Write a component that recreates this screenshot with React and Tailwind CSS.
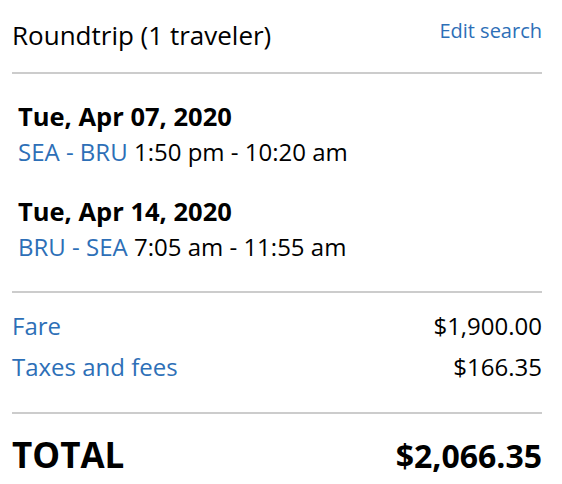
import React from 'react';

const BLUE = 'text-[#2d6fb7]';

const Leg = ({ date, route, times, className }) => (
  <div className={className}>
    <div className="text-[25.5px] leading-[34px] font-bold">{date}</div>
    <div className="mt-[2px] text-[24px] leading-[34px]">
      <span className={BLUE}>{route}</span> {times}
    </div>
  </div>
);

const PriceRow = ({ label, amount, className }) => (
  <div className={`flex justify-between text-[24px] leading-[34px] ${className || ''}`}>
    <span className={BLUE}>{label}</span>
    <span>{amount}</span>
  </div>
);

export default function App() {
  return (
    <div
      className="w-[562px] h-[484px] bg-white text-black pl-3 pr-[20px] overflow-hidden"
      style={{ fontFamily: '"Open Sans", "Liberation Sans", sans-serif' }}
    >
      {/* Header */}
      <div className="flex justify-between items-start pt-[17px] pb-[19px] border-b-2 border-[#cccccc]">
        <span className="text-[26px] leading-[36px]">Roundtrip (1 traveler)</span>
        <a className={`text-[20px] leading-[28px] ${BLUE}`} href="#">Edit search</a>
      </div>

      {/* Flights */}
      <div className="pl-[6px] pt-[25px] pb-[27px] border-b-2 border-[#cccccc]">
        <Leg date="Tue, Apr 07, 2020" route="SEA - BRU" times="1:50 pm - 10:20 am" />
        <Leg className="mt-[25px]" date="Tue, Apr 14, 2020" route="BRU - SEA" times="7:05 am - 11:55 am" />
      </div>

      {/* Fare breakdown */}
      <div className="pt-[16px] pb-[28px] border-b-2 border-[#cccccc]">
        <PriceRow label="Fare" amount="$1,900.00" />
        <PriceRow className="mt-[7px]" label="Taxes and fees" amount="$166.35" />
      </div>

      {/* Total */}
      <div className="flex justify-between items-baseline pt-[19px] font-bold leading-[44px]">
        <span className="text-[35px]">TOTAL</span>
        <span className="text-[32px]">$2,066.35</span>
      </div>
    </div>
  );
}
